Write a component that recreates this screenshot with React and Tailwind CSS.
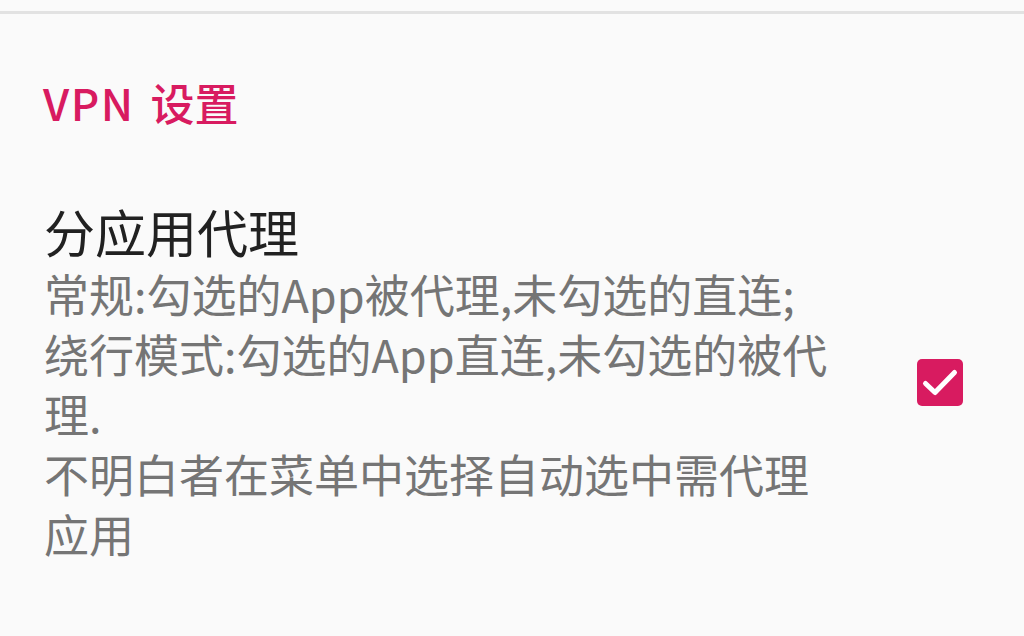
export default function App() {
  const font = { fontFamily: '"Noto Sans CJK SC", "Noto Sans", sans-serif' };
  return (
    <div className="w-[1024px] h-[636px] bg-[#fafafa] overflow-hidden" style={font}>
      <div className="h-[11px]" />
      <div className="h-[3px] bg-[#e2e2e2]" />
      <div className="pl-[43px] pt-[59px]">
        <div className="text-[44px] leading-[58px] font-medium text-[#d81b60]">
          <span className="tracking-[1.5px]">VPN</span>
          <span className="ml-[16px]">设置</span>
        </div>
      </div>
      <div className="flex items-center pl-[44px] pr-[61px] pt-[70px]">
        <div className="w-[802px] mr-[71px]">
          <div className="text-[51px] leading-[60px] text-[#212121]">分应用代理</div>
          <div className="mt-[3px] text-[45px] leading-[60px] text-[#757575] whitespace-pre-line">
            {"常规:勾选的App被代理,未勾选的直连;\n绕行模式:勾选的App直连,未勾选的被代理.\n不明白者在菜单中选择自动选中需代理应用"}
          </div>
        </div>
        <div className="w-[46px] h-[47px] rounded-[5px] bg-[#d81b60]">
          <svg width="46" height="47" viewBox="0 0 46 47" fill="none" stroke="white" strokeWidth="5" strokeLinecap="round" strokeLinejoin="round">
            <path d="M8.5 24.5L18 33.5L37.5 13.5" />
          </svg>
        </div>
      </div>
    </div>
  );
}
